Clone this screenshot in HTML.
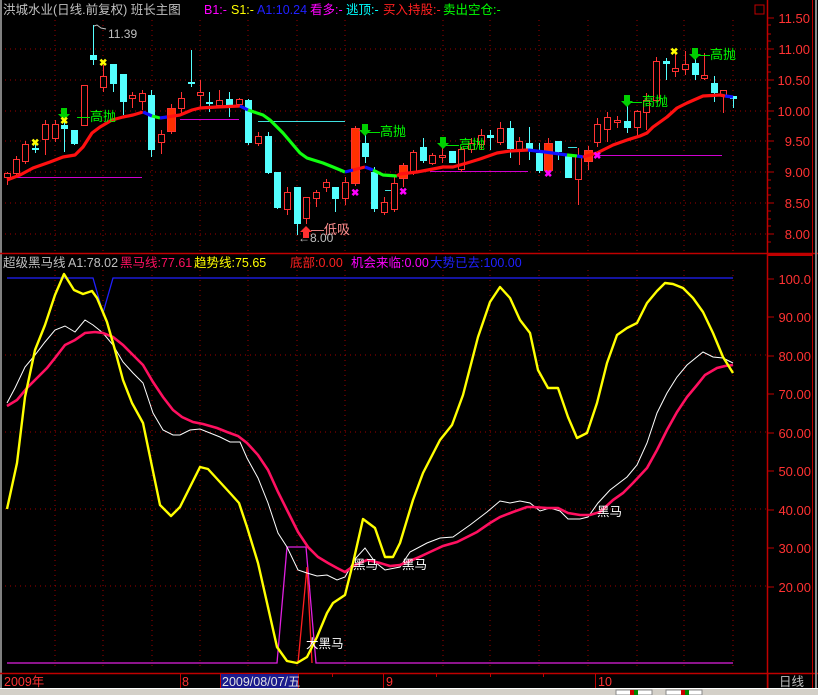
<!DOCTYPE html>
<html><head><meta charset="utf-8"><style>
html,body{margin:0;padding:0;background:#000;}
body{width:818px;height:695px;overflow:hidden;position:relative;font-family:"Liberation Sans","Noto Sans CJK SC",sans-serif;}
svg{position:absolute;left:0;top:0;}
text{font-family:"Liberation Sans","Noto Sans CJK SC",sans-serif;}
</style></head><body>
<svg width="818" height="695" viewBox="0 0 818 695" xmlns="http://www.w3.org/2000/svg">
<rect width="818" height="695" fill="#000"/>
<line x1="1" y1="0" x2="1" y2="688" stroke="#808080" stroke-width="2"/>
<g stroke="#a00000" stroke-width="1" stroke-dasharray="1,4">
<line x1="5" y1="49" x2="767" y2="49"/><line x1="5" y1="80" x2="767" y2="80"/><line x1="5" y1="111" x2="767" y2="111"/>
<line x1="5" y1="141" x2="767" y2="141"/><line x1="5" y1="172" x2="767" y2="172"/><line x1="5" y1="203" x2="767" y2="203"/><line x1="5" y1="234" x2="767" y2="234"/>
<line x1="55" y1="20" x2="55" y2="252"/><line x1="103" y1="20" x2="103" y2="252"/><line x1="152" y1="20" x2="152" y2="252"/><line x1="200" y1="20" x2="200" y2="252"/><line x1="248" y1="20" x2="248" y2="252"/><line x1="297" y1="20" x2="297" y2="252"/><line x1="345" y1="20" x2="345" y2="252"/><line x1="443" y1="20" x2="443" y2="252"/><line x1="490" y1="20" x2="490" y2="252"/><line x1="539" y1="20" x2="539" y2="252"/><line x1="588" y1="20" x2="588" y2="252"/><line x1="637" y1="20" x2="637" y2="252"/><line x1="684" y1="20" x2="684" y2="252"/><line x1="733" y1="20" x2="733" y2="252"/>
<line x1="5" y1="355" x2="767" y2="355"/><line x1="5" y1="432" x2="767" y2="432"/><line x1="5" y1="509" x2="767" y2="509"/><line x1="5" y1="586" x2="767" y2="586"/>
<line x1="55" y1="270" x2="55" y2="668"/><line x1="103" y1="270" x2="103" y2="668"/><line x1="152" y1="270" x2="152" y2="668"/><line x1="200" y1="270" x2="200" y2="668"/><line x1="248" y1="270" x2="248" y2="668"/><line x1="297" y1="270" x2="297" y2="668"/><line x1="345" y1="270" x2="345" y2="668"/><line x1="443" y1="270" x2="443" y2="668"/><line x1="490" y1="270" x2="490" y2="668"/><line x1="539" y1="270" x2="539" y2="668"/><line x1="588" y1="270" x2="588" y2="668"/><line x1="637" y1="270" x2="637" y2="668"/><line x1="684" y1="270" x2="684" y2="668"/><line x1="733" y1="270" x2="733" y2="668"/>
</g>
<line x1="0" y1="253.5" x2="818" y2="253.5" stroke="#c00000" stroke-width="1.5"/>
<line x1="767.5" y1="0" x2="767.5" y2="688" stroke="#c00000" stroke-width="1.5"/>
<line x1="0" y1="673.5" x2="818" y2="673.5" stroke="#c00000" stroke-width="1.5"/>
<line x1="812.5" y1="0" x2="812.5" y2="688" stroke="#c00000" stroke-width="1"/>
<line x1="816" y1="0" x2="816" y2="688" stroke="#888" stroke-width="2"/>
<rect x="768" y="254" width="44" height="2" fill="#c00000"/>
<rect x="755" y="5" width="9" height="9" fill="none" stroke="#c00000"/>
<g stroke="#c00000">
<line x1="768" y1="18" x2="774" y2="18"/><line x1="768" y1="49" x2="774" y2="49"/><line x1="768" y1="80" x2="774" y2="80"/><line x1="768" y1="111" x2="774" y2="111"/><line x1="768" y1="141" x2="774" y2="141"/><line x1="768" y1="172" x2="774" y2="172"/><line x1="768" y1="203" x2="774" y2="203"/><line x1="768" y1="234" x2="774" y2="234"/>
<line x1="768" y1="25" x2="771" y2="25"/><line x1="768" y1="34" x2="771" y2="34"/><line x1="768" y1="41" x2="771" y2="41"/><line x1="768" y1="57" x2="771" y2="57"/><line x1="768" y1="65" x2="771" y2="65"/><line x1="768" y1="72" x2="771" y2="72"/><line x1="768" y1="88" x2="771" y2="88"/><line x1="768" y1="96" x2="771" y2="96"/><line x1="768" y1="103" x2="771" y2="103"/><line x1="768" y1="119" x2="771" y2="119"/><line x1="768" y1="126" x2="771" y2="126"/><line x1="768" y1="134" x2="771" y2="134"/><line x1="768" y1="149" x2="771" y2="149"/><line x1="768" y1="157" x2="771" y2="157"/><line x1="768" y1="164" x2="771" y2="164"/><line x1="768" y1="180" x2="771" y2="180"/><line x1="768" y1="188" x2="771" y2="188"/><line x1="768" y1="195" x2="771" y2="195"/><line x1="768" y1="211" x2="771" y2="211"/><line x1="768" y1="219" x2="771" y2="219"/><line x1="768" y1="226" x2="771" y2="226"/><line x1="768" y1="242" x2="771" y2="242"/>
<line x1="768" y1="279" x2="774" y2="279"/><line x1="768" y1="317" x2="774" y2="317"/><line x1="768" y1="356" x2="774" y2="356"/><line x1="768" y1="394" x2="774" y2="394"/><line x1="768" y1="433" x2="774" y2="433"/><line x1="768" y1="471" x2="774" y2="471"/><line x1="768" y1="510" x2="774" y2="510"/><line x1="768" y1="548" x2="774" y2="548"/><line x1="768" y1="587" x2="774" y2="587"/>
</g>
<g fill="#ff3232" font-size="13" text-anchor="end">
<text x="810" y="23">11.50</text><text x="810" y="54">11.00</text><text x="810" y="85">10.50</text><text x="810" y="116">10.00</text><text x="810" y="146">9.50</text><text x="810" y="177">9.00</text><text x="810" y="208">8.50</text><text x="810" y="239">8.00</text>
<text x="811" y="284">100.0</text><text x="811" y="322">90.00</text><text x="811" y="361">80.00</text><text x="811" y="399">70.00</text><text x="811" y="438">60.00</text><text x="811" y="476">50.00</text><text x="811" y="515">40.00</text><text x="811" y="553">30.00</text><text x="811" y="592">20.00</text>
</g>
<g font-size="12.5">
<text x="3" y="14" fill="#c0c0c0">洪城水业(日线.前复权) 班长主图</text>
<text x="204" y="14" fill="#ff00ff">B1:-</text>
<text x="231" y="14" fill="#ffff00">S1:-</text>
<text x="257" y="14" fill="#2020ff">A1:10.24</text>
<text x="310" y="14" fill="#ff00ff">看多:-</text>
<text x="346" y="14" fill="#00ffff">逃顶:-</text>
<text x="383" y="14" fill="#ff2020">买入持股:-</text>
<text x="443" y="14" fill="#00ff00">卖出空仓:-</text>
<text x="3" y="267" fill="#c0c0c0">超级黑马线</text>
<text x="68" y="267" fill="#c0c0c0">A1:78.02</text>
<text x="120" y="267" fill="#ff1060">黑马线:77.61</text>
<text x="194" y="267" fill="#ffff00">趋势线:75.65</text>
<text x="290" y="267" fill="#ff2020">底部:0.00</text>
<text x="351" y="267" fill="#ff00ff">机会来临:0.00</text>
<text x="430" y="267" fill="#2020ff">大势已去:100.00</text>
</g>
<g stroke-width="1">
<line x1="7" y1="177.5" x2="142" y2="177.5" stroke="#d000d0"/>
<line x1="180" y1="119.5" x2="239" y2="119.5" stroke="#d000d0"/>
<line x1="258" y1="121.5" x2="345" y2="121.5" stroke="#40e0e0"/>
<line x1="430" y1="171.5" x2="528" y2="171.5" stroke="#d000d0"/>
<line x1="597" y1="155.5" x2="722" y2="155.5" stroke="#d000d0"/>
<line x1="385" y1="190.5" x2="394" y2="190.5" stroke="#40e0e0"/>
<line x1="568" y1="147.5" x2="577" y2="147.5" stroke="#40e0e0"/>
</g>
<g stroke-width="1">
<g stroke="#ff3232">
<line x1="7.5" y1="172" x2="7.5" y2="185"/><line x1="16.5" y1="156" x2="16.5" y2="176"/><line x1="25.5" y1="141" x2="25.5" y2="164"/><line x1="45.5" y1="120" x2="45.5" y2="155"/><line x1="55.5" y1="120" x2="55.5" y2="142"/><line x1="84.5" y1="85" x2="84.5" y2="125"/><line x1="103.5" y1="65" x2="103.5" y2="92"/><line x1="132.5" y1="92" x2="132.5" y2="108"/><line x1="142.5" y1="90" x2="142.5" y2="110"/><line x1="161.5" y1="130" x2="161.5" y2="154"/><line x1="171.5" y1="104" x2="171.5" y2="134"/><line x1="181.5" y1="92" x2="181.5" y2="115"/><line x1="200.5" y1="80" x2="200.5" y2="107"/><line x1="219.5" y1="90" x2="219.5" y2="108"/><line x1="239.5" y1="98" x2="239.5" y2="107"/><line x1="258.5" y1="132" x2="258.5" y2="146"/><line x1="287.5" y1="187" x2="287.5" y2="215"/><line x1="306.5" y1="197" x2="306.5" y2="224"/><line x1="316.5" y1="190" x2="316.5" y2="207"/><line x1="326.5" y1="179" x2="326.5" y2="192"/><line x1="345.5" y1="177" x2="345.5" y2="205"/><line x1="355.5" y1="126" x2="355.5" y2="186"/><line x1="384.5" y1="197" x2="384.5" y2="215"/><line x1="394.5" y1="177" x2="394.5" y2="212"/><line x1="403.5" y1="163" x2="403.5" y2="187"/><line x1="413.5" y1="150" x2="413.5" y2="175"/><line x1="432.5" y1="153" x2="432.5" y2="165"/><line x1="442.5" y1="148" x2="442.5" y2="163"/><line x1="461.5" y1="147" x2="461.5" y2="172"/><line x1="471.5" y1="138" x2="471.5" y2="153"/><line x1="481.5" y1="129" x2="481.5" y2="150"/><line x1="500.5" y1="122" x2="500.5" y2="145"/><line x1="519.5" y1="137" x2="519.5" y2="165"/><line x1="548.5" y1="138" x2="548.5" y2="175"/><line x1="578.5" y1="148" x2="578.5" y2="205"/><line x1="588.5" y1="146" x2="588.5" y2="170"/><line x1="597.5" y1="118" x2="597.5" y2="147"/><line x1="607.5" y1="112" x2="607.5" y2="142"/><line x1="617.5" y1="116" x2="617.5" y2="128"/><line x1="637.5" y1="110" x2="637.5" y2="137"/><line x1="646.5" y1="93" x2="646.5" y2="130"/><line x1="656.5" y1="57" x2="656.5" y2="100"/><line x1="675.5" y1="53" x2="675.5" y2="77"/><line x1="685.5" y1="51" x2="685.5" y2="75"/><line x1="704.5" y1="53" x2="704.5" y2="80"/><line x1="723.5" y1="90" x2="723.5" y2="113"/>
</g>
<g stroke="#54ffff">
<line x1="35.5" y1="143" x2="35.5" y2="153"/><line x1="64.5" y1="117" x2="64.5" y2="152"/><line x1="74.5" y1="130" x2="74.5" y2="145"/><line x1="93.5" y1="25" x2="93.5" y2="65"/><line x1="113.5" y1="64" x2="113.5" y2="92"/><line x1="123.5" y1="74" x2="123.5" y2="115"/><line x1="151.5" y1="90" x2="151.5" y2="157"/><line x1="191.5" y1="50" x2="191.5" y2="87"/><line x1="209.5" y1="92" x2="209.5" y2="112"/><line x1="229.5" y1="92" x2="229.5" y2="117"/><line x1="248.5" y1="99" x2="248.5" y2="145"/><line x1="268.5" y1="132" x2="268.5" y2="174"/><line x1="277.5" y1="172" x2="277.5" y2="209"/><line x1="297.5" y1="187" x2="297.5" y2="235"/><line x1="335.5" y1="187" x2="335.5" y2="212"/><line x1="365.5" y1="135" x2="365.5" y2="163"/><line x1="374.5" y1="167" x2="374.5" y2="212"/><line x1="423.5" y1="138" x2="423.5" y2="163"/><line x1="452.5" y1="151" x2="452.5" y2="163"/><line x1="490.5" y1="130" x2="490.5" y2="150"/><line x1="510.5" y1="121" x2="510.5" y2="158"/><line x1="529.5" y1="127" x2="529.5" y2="160"/><line x1="539.5" y1="143" x2="539.5" y2="173"/><line x1="558.5" y1="141" x2="558.5" y2="160"/><line x1="568.5" y1="155" x2="568.5" y2="178"/><line x1="627.5" y1="105" x2="627.5" y2="133"/><line x1="666.5" y1="58" x2="666.5" y2="80"/><line x1="695.5" y1="58" x2="695.5" y2="80"/><line x1="714.5" y1="76" x2="714.5" y2="102"/><line x1="733.5" y1="96" x2="733.5" y2="108"/>
</g>
<g stroke="#ff3232" fill="#000">
<rect x="4.5" y="173.5" width="6" height="4"/><rect x="13.5" y="159.5" width="6" height="14"/><rect x="22.5" y="144.5" width="6" height="17"/><rect x="42.5" y="124.5" width="6" height="15"/><rect x="52.5" y="124.5" width="6" height="14"/><rect x="81.5" y="85.5" width="6" height="40"/><rect x="100.5" y="76.5" width="6" height="11"/><rect x="129.5" y="95.5" width="6" height="3"/><rect x="139.5" y="93.5" width="6" height="8"/><rect x="158.5" y="134.5" width="6" height="8"/><rect x="178.5" y="98.5" width="6" height="10"/><rect x="197.5" y="92.5" width="6" height="3"/><rect x="216.5" y="100.5" width="6" height="5"/><rect x="236.5" y="99.5" width="6" height="5"/><rect x="255.5" y="136.5" width="6" height="7"/><rect x="284.5" y="192.5" width="6" height="17"/><rect x="303.5" y="197.5" width="6" height="21"/><rect x="313.5" y="192.5" width="6" height="6"/><rect x="323.5" y="182.5" width="6" height="5"/><rect x="342.5" y="182.5" width="6" height="16"/><rect x="381.5" y="202.5" width="6" height="10"/><rect x="391.5" y="183.5" width="6" height="26"/><rect x="410.5" y="152.5" width="6" height="20"/><rect x="429.5" y="155.5" width="6" height="8"/><rect x="439.5" y="155.5" width="6" height="2"/><rect x="458.5" y="149.5" width="6" height="20"/><rect x="468.5" y="143.5" width="6" height="6"/><rect x="478.5" y="135.5" width="6" height="9"/><rect x="497.5" y="128.5" width="6" height="14"/><rect x="516.5" y="141.5" width="6" height="8"/><rect x="575.5" y="155.5" width="6" height="24"/><rect x="594.5" y="124.5" width="6" height="18"/><rect x="604.5" y="117.5" width="6" height="12"/><rect x="614.5" y="120.5" width="6" height="2"/><rect x="634.5" y="111.5" width="6" height="16"/><rect x="643.5" y="100.5" width="6" height="12"/><rect x="653.5" y="61.5" width="6" height="39"/><rect x="672.5" y="68.5" width="6" height="3"/><rect x="682.5" y="64.5" width="6" height="5"/><rect x="701.5" y="75.5" width="6" height="3"/><rect x="720.5" y="90.5" width="6" height="5"/>
</g>
<g fill="#ff3000" stroke="#ff3232">
<rect x="167.5" y="108.5" width="8" height="23"/><rect x="351.5" y="128.5" width="8" height="55"/><rect x="399.5" y="165.5" width="8" height="13"/><rect x="544.5" y="143.5" width="8" height="27"/><rect x="584.5" y="150.5" width="8" height="11"/>
</g>
<g fill="#54ffff">
<rect x="32" y="148" width="7" height="2"/><rect x="61" y="125" width="7" height="4"/><rect x="71" y="130" width="7" height="14"/><rect x="90" y="55" width="7" height="5"/><rect x="110" y="64" width="7" height="20"/><rect x="120" y="74" width="7" height="28"/><rect x="148" y="95" width="7" height="55"/><rect x="188" y="82" width="7" height="2"/><rect x="206" y="102" width="7" height="2"/><rect x="226" y="99" width="7" height="6"/><rect x="245" y="100" width="7" height="43"/><rect x="265" y="136" width="7" height="37"/><rect x="274" y="172" width="7" height="36"/><rect x="294" y="187" width="7" height="37"/><rect x="332" y="187" width="7" height="12"/><rect x="362" y="143" width="7" height="14"/><rect x="371" y="172" width="7" height="37"/><rect x="420" y="147" width="7" height="14"/><rect x="449" y="151" width="7" height="12"/><rect x="487" y="135" width="7" height="3"/><rect x="507" y="128" width="7" height="21"/><rect x="526" y="143" width="7" height="7"/><rect x="536" y="153" width="7" height="18"/><rect x="555" y="141" width="7" height="11"/><rect x="565" y="155" width="7" height="23"/><rect x="624" y="121" width="7" height="7"/><rect x="663" y="61" width="7" height="3"/><rect x="692" y="63" width="7" height="12"/><rect x="711" y="83" width="7" height="10"/><rect x="730" y="96" width="7" height="3"/>
</g>
</g>
<g fill="none" stroke-width="3.2" stroke-linejoin="round">
<polyline stroke="#ff1010" points="7,180 20,175 33,168 50,162 63,157 75,155 83,147 92,133 100,127 112,120 123,117 133,115 143,112"/>
<polyline stroke="#1010ff" points="143,112 152,116"/>
<polyline stroke="#10ff10" points="152,116 160,118"/>
<polyline stroke="#1010ff" points="160,118 167,117"/>
<polyline stroke="#ff1010" points="167,117 180,115 192,110 200,108 217,107 240,106"/>
<polyline stroke="#1010ff" points="240,106 248,110"/>
<polyline stroke="#10ff10" points="248,110 263,115 270,120 283,133 300,153 307,158 323,163 333,167 345,172"/>
<polyline stroke="#1010ff" points="345,172 353,170"/>
<polyline stroke="#ff1010" points="353,170 365,167"/>
<polyline stroke="#1010ff" points="365,167 373,170"/>
<polyline stroke="#10ff10" points="373,170 383,175 397,176"/>
<polyline stroke="#ff1010" points="397,176 400,174 417,172 433,169 443,167 453,167 467,163 480,159 497,153 510,151 528,150"/>
<polyline stroke="#1010ff" points="528,150 545,152 567,155"/>
<polyline stroke="#10ff10" points="567,155 577,156"/>
<polyline stroke="#1010ff" points="577,156 583,157"/>
<polyline stroke="#ff1010" points="583,157 597,153 613,145 627,140 640,136 647,133 653,127 667,117 677,108 687,103 703,96 720,95 725,96"/>
<polyline stroke="#1010ff" points="725,96 733,97"/>
</g>
<g font-size="13" fill="#00ff00">
<text x="77" y="121">—高抛</text><text x="367" y="136">—高抛</text><text x="446" y="149">—高抛</text><text x="629" y="106">—高抛</text><text x="697" y="59">—高抛</text>
</g>
<g fill="#00d000">
<path d="M61,108 h6 v6 h3 l-6,6 l-6,-6 h3z"/><path d="M362,124 h6 v6 h3 l-6,6 l-6,-6 h3z"/><path d="M440,137 h6 v6 h3 l-6,6 l-6,-6 h3z"/><path d="M624,95 h6 v6 h3 l-6,6 l-6,-6 h3z"/><path d="M692,48 h6 v6 h3 l-6,6 l-6,-6 h3z"/>
<path d="M303,238 h6 v-6 h3 l-6,-6 l-6,6 h3z" fill="#ff3030"/>
</g>
<text x="311" y="234" font-size="13" fill="#ff9090">—低吸</text>
<text x="298" y="242" font-size="12" fill="#c0c0c0">←8.00</text>
<text x="108" y="38" font-size="12" fill="#c0c0c0">11.39</text>
<polyline points="94,26 97,25 101,28 106,29" fill="none" stroke="#c0c0c0"/>
<g fill="#ffff00" font-size="10" font-weight="bold">
<text x="31" y="146">✖</text><text x="60" y="124">✖</text><text x="99" y="66">✖</text><text x="670" y="55">✖</text>
</g>
<g fill="#ff00ff" font-size="10" font-weight="bold">
<text x="351" y="196">✖</text><text x="399" y="195">✖</text><text x="544" y="177">✖</text><text x="593" y="159">✖</text>
</g>
<polyline fill="none" stroke="#2020ff" stroke-width="1.3" points="7,278 93,278 103,313 113,278 733,278"/>
<polyline fill="none" stroke="#e020e0" stroke-width="1.3" points="7,663 277,663 287,547 306,547 316,663 733,663"/>
<polyline fill="none" stroke="#ff2020" stroke-width="1.3" points="298,663 307,567 312,663"/>
<polyline fill="none" stroke="#ffffff" stroke-width="1" points="7,403 15,388 25,367 35,355 45,342 55,330 65,326 75,332 85,320 93,325 103,333 113,345 123,362 133,373 143,383 153,413 163,430 173,435 180,435 190,430 200,429 210,433 220,437 230,442 240,442 247,458 258,478 268,503 278,533 287,547 298,570 307,573 317,576 327,575 337,580 345,577 355,559 365,548 375,562 385,570 400,567 410,552 427,543 440,538 453,537 470,525 487,512 500,501 510,503 520,501 530,503 540,511 550,508 560,511 568,519 580,519 588,517 598,503 610,490 627,477 637,465 647,443 657,413 667,393 677,377 687,365 703,352 713,357 723,358 733,363"/>
<polyline fill="none" stroke="#ff1060" stroke-width="2.6" points="7,406 17,400 27,388 37,378 47,368 55,358 65,345 75,340 85,333 95,332 103,333 113,337 123,345 133,355 143,365 153,382 163,397 173,410 182,417 193,422 203,424 217,428 227,432 238,436 247,443 258,455 268,470 278,492 288,512 298,532 308,547 318,557 328,563 337,568 345,572 355,565 367,560 380,563 390,566 400,565 417,558 430,552 443,546 457,542 477,532 490,523 500,517 513,512 527,507 533,507 547,508 558,508 568,513 580,515 590,515 600,512 613,500 623,493 633,483 647,468 657,450 667,430 677,412 687,397 697,385 705,375 717,368 725,366 733,365"/>
<polyline fill="none" stroke="#ffff00" stroke-width="2.4" stroke-linejoin="round" points="7,509 17,463 25,397 35,350 45,325 55,295 64,274 74,290 83,294 92,291 97,298 107,322 115,350 123,380 132,403 143,423 160,505 171,516 180,507 200,467 208,469 230,493 239,503 247,527 258,563 277,647 287,661 297,663 307,657 317,637 327,613 333,603 345,595 353,563 363,519 375,528 385,557 393,557 400,543 413,500 423,473 440,440 452,425 463,395 478,337 490,302 500,287 510,298 520,320 530,333 538,370 548,388 558,388 568,417 577,438 587,433 597,403 607,363 617,335 627,328 637,323 647,303 657,291 665,283 673,284 683,288 693,298 703,312 713,333 723,357 733,373"/>
<g fill="#ffffff" font-size="12.5">
<text x="353" y="569">黑马</text><text x="402" y="569">黑马</text><text x="597" y="516">黑马</text><text x="306" y="648">大黑马</text>
</g>
<rect x="221" y="674" width="77" height="14" fill="#1a1a8c"/>
<g stroke="#c00000"><line x1="180.5" y1="674" x2="180.5" y2="688"/><line x1="220.5" y1="674" x2="220.5" y2="688"/><line x1="298.5" y1="674" x2="298.5" y2="688"/><line x1="383.5" y1="674" x2="383.5" y2="688"/><line x1="595.5" y1="674" x2="595.5" y2="688"/><line x1="332.5" y1="674" x2="332.5" y2="677"/><line x1="436.5" y1="674" x2="436.5" y2="677"/><line x1="490.5" y1="674" x2="490.5" y2="677"/><line x1="543.5" y1="674" x2="543.5" y2="677"/></g>
<g font-size="12.5">
<text x="4" y="686" fill="#ff3232">2009年</text>
<text x="182" y="686" fill="#ff3232">8</text>
<text x="222" y="686" fill="#e0e0e0">2009/08/07/五</text>
<text x="386" y="686" fill="#ff3232">9</text>
<text x="598" y="686" fill="#ff3232">10</text>
<text x="779" y="686" fill="#c0c0c0">日线</text>
</g>
<line x1="768" y1="674" x2="768" y2="688" stroke="#c00000"/>
<rect x="0" y="688" width="818" height="7" fill="#d4d0c8"/>
<line x1="0" y1="688.5" x2="818" y2="688.5" stroke="#ffffff"/>
<rect x="616" y="690" width="36" height="5" fill="#fff" stroke="#888"/><rect x="666" y="690" width="36" height="5" fill="#fff" stroke="#888"/>
<rect x="630" y="690" width="4" height="5" fill="#c00"/><rect x="634" y="690" width="4" height="5" fill="#080"/><rect x="681" y="690" width="4" height="5" fill="#c00"/><rect x="685" y="690" width="4" height="5" fill="#080"/>
</svg>
</body></html>
